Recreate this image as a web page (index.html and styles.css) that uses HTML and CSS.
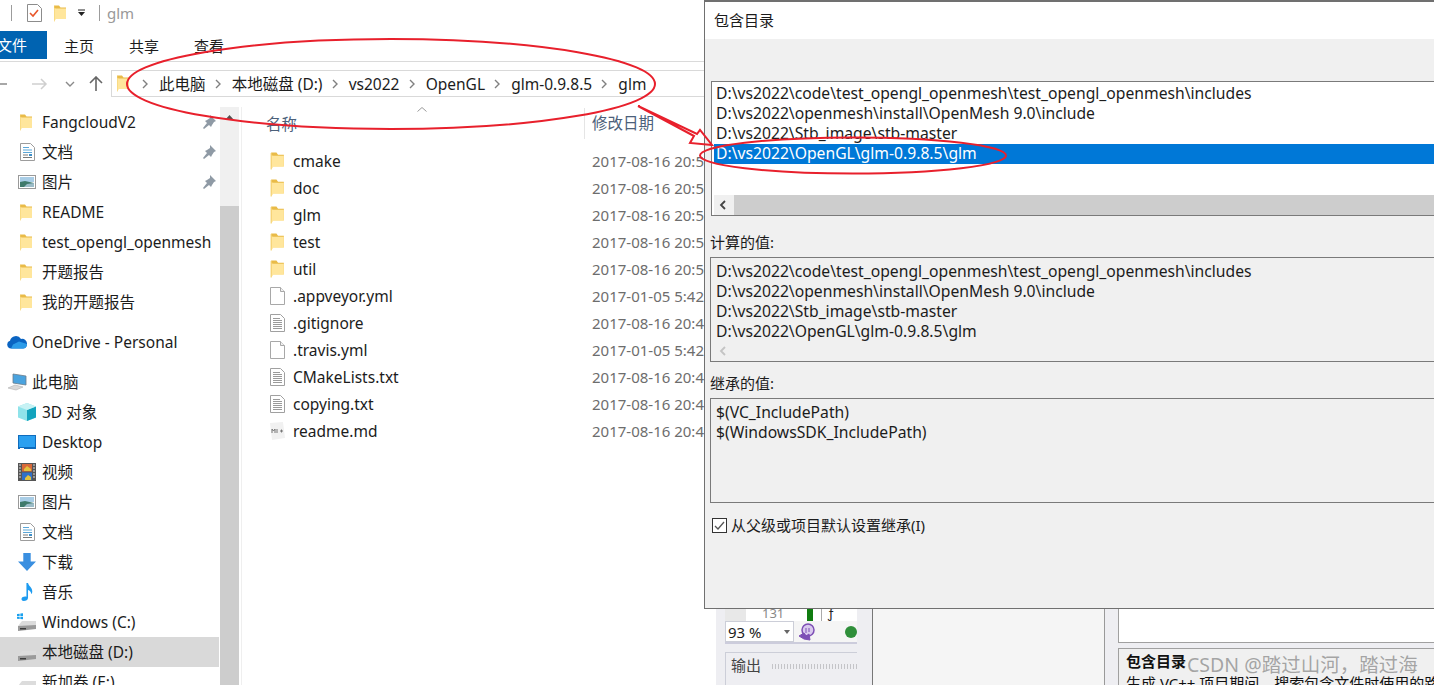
FILE: index.html
```html
<!DOCTYPE html>
<html lang="zh-CN">

<head>
    <meta charset="UTF-8">
    <title>glm</title>
    <link rel="stylesheet" href="styles.css">
</head>

<body>
    <svg class="defs" width="0" height="0">
        <symbol id="i-folder" viewBox="0 0 12 17">
            <path d="M0 .5h5l1.5 2H12v11H0z" fill="#e9bb48" />
            <path d="M2 3.5h10v10.5H2L0 16.5V3z" fill="#ffe69c" />
            <path d="M0 1v15.5" stroke="#f3cf6c" />
        </symbol>
        <symbol id="i-file" viewBox="0 0 15 18">
            <path d="M.5.5h10l4 4v13H.5z" fill="#fff" stroke="#a8a8a8" />
            <path d="M10.5.5v4h4" fill="#f0f0f0" stroke="#a8a8a8" />
        </symbol>
        <symbol id="i-text" viewBox="0 0 15 18">
            <path d="M.5.5h10l4 4v13H.5z" fill="#fff" stroke="#a0a0a0" />
            <path d="M3 4.5h7M3 6.5h9M3 8.5h9M3 10.5h9M3 12.5h9M3 14.5h9" stroke="#9a9a9a" />
        </symbol>
        <symbol id="i-md" viewBox="0 0 15 18">
            <path d="M0 1l13-1 2 16-13 2z" fill="#f1f1f1" />
            <path d="M2 11V7l1.500 2L5 7v4M7 11V7M10 9h3M11.500 7.500v3" fill="none" stroke="#777" />
        </symbol>
        <symbol id="i-pin" viewBox="0 0 14 14">
            <path d="M8 0l6 6-2 1-2 3-1 2-2-2-5 4-1-1 4-5-2-2 2-1 3-2z" fill="#8f9aa5" />
        </symbol>
        <symbol id="i-doc" viewBox="0 0 15 18">
            <path d="M.5.5h10l4 4v13H.5z" fill="#fff" stroke="#9c9c9c" />
            <path d="M3 4.500h6M3 7h9M3 9.500h9" stroke="#5ba7d8" />
            <path d="M3 12h5M3 14.500h9" stroke="#7a7a7a" />
            <path d="M9 11h3v2H9z" fill="#3d8fc9" />
        </symbol>
        <symbol id="i-pic" viewBox="0 0 18 14">
            <rect x=".5" y=".5" width="17" height="13" fill="#fff" stroke="#999" />
            <rect x="2" y="2" width="14" height="5" fill="#a9cde6" />
            <path d="M2 7l5-1 9 2v4H2z" fill="#3f7a6b" />
            <path d="M9 9l7-1v4H6z" fill="#9bbcc8" />
        </symbol>
        <symbol id="i-cloud" viewBox="0 0 20 13">
            <path d="M4 13a4 4 0 0 1-1-7.800A6 6 0 0 1 14 3.500a4.800 4.800 0 0 1 6 5c0 3-2 4.500-4 4.500z" fill="#0a64c2" />
            <path d="M4 13h12c2 0 4-1.500 4-4.500L12 6 6 9z" fill="#2b9be8" />
        </symbol>
        <symbol id="i-pc" viewBox="0 0 20 18">
            <path d="M6 1l13 2v9l-13-2z" fill="#4aa3df" stroke="#6b7c8a" stroke-width=".8" />
            <path d="M1 15l7-3 8 2-7 3z" fill="#d9d9d9" stroke="#b0b0b0" stroke-width=".6" />
        </symbol>
        <symbol id="i-cube" viewBox="0 0 18 18">
            <path d="M9 0l9 3.500v11L9 18l-9-3.500v-11z" fill="#8fe3ea" />
            <path d="M9 7l9-3.500v11L9 18z" fill="#13a3bd" />
            <path d="M9 0l9 3.500L9 7 0 3.500z" fill="#c7f2f4" />
        </symbol>
        <symbol id="i-desktop" viewBox="0 0 18 14">
            <rect width="18" height="14" fill="#0f6cbd" />
            <rect x="1" y="1" width="16" height="11" fill="#2ba0f0" />
            <path d="M2 13h4v1H2z" fill="#fff" />
        </symbol>
        <symbol id="i-video" viewBox="0 0 18 18">
            <rect width="18" height="18" fill="#555" />
            <rect x="4" y="1" width="10" height="7.500" fill="#d8693a" />
            <rect x="4" y="9.500" width="10" height="7.500" fill="#2f70c9" />
            <path d="M6 6l3-3 4 3v2H6zM7 15l3-3 3 2v3H7z" fill="#e2c23f" />
            <path d="M1 2h2M1 5h2M1 8h2M1 11h2M1 14h2M15 2h2M15 5h2M15 8h2M15 11h2M15 14h2" stroke="#ddd" />
        </symbol>
        <symbol id="i-down" viewBox="0 0 17 17">
            <path d="M5 0h7v8h5l-8.500 9L0 8h5z" fill="#3a8fe0" />
        </symbol>
        <symbol id="i-music" viewBox="0 0 12 17">
            <path d="M5 0h1.500c.5 3 4 4 4 8 0 1-.3 2-1 2.500.3-2-1.500-3.500-3-4V14c0 2-2 3-4 3s-2.500-1.500-2-2.500 2-2 4.500-1.500z" fill="#1d9bf0" />
        </symbol>
        <symbol id="i-drive" viewBox="0 0 18 10">
            <path d="M4 0h14v5L0 10V5z" fill="#dcdcdc" />
            <path d="M0 5l18-1v4L0 10z" fill="#9a9a9a" />
            <path d="M2 7h6v1.500H2z" fill="#3c3c3c" />
        </symbol>
        <symbol id="i-win" viewBox="0 0 18 14">
            <path d="M0 1l4-.5V4H0zM5 .4L9 0v4H5zM0 5h4v3.500L0 8zM5 5h4v4l-4-.5z" fill="#19a0ee" />
        </symbol>
    </svg>

    <div class="desktop">
        <div class="explorer">
            <div class="titlebar">
                <i class="sep"></i>
                <svg class="t-check" viewBox="0 0 15 18">
                    <path d="M.5.5h10l4 4v13H.5z" fill="#fff" stroke="#8c8c8c" />
                    <path d="M3 9l3 3 5-6" fill="none" stroke="#e8562a" stroke-width="1.600" />
                </svg>
                <svg class="t-folder"><use href="#i-folder" /></svg>
                <svg class="t-drop" viewBox="0 0 9 8">
                    <path d="M1 1h7" stroke="#222" />
                    <path d="M1 3h7L4.500 7z" fill="#222" />
                </svg>
                <i class="sep"></i>
                <span class="t-name">glm</span>
            </div>
            <div class="ribbon">
                <span class="tab-file">文件</span>
                <span class="tab tab-home">主页</span>
                <span class="tab">共享</span>
                <span class="tab">查看</span>
            </div>
            <div class="navbar">
                <div class="nav-buttons">
                    <svg class="nav-back" viewBox="0 0 16 12"><path d="M0 6h15" stroke="#8a8a8a" stroke-width="1.500" /></svg>
                    <svg class="nav-fwd" viewBox="0 0 16 12"><path d="M0 6h14M9 1l5 5-5 5" fill="none" stroke="#cfcfcf" stroke-width="1.500" /></svg>
                    <svg class="nav-more" viewBox="0 0 10 6"><path d="M1 1l4 4 4-4" fill="none" stroke="#8a8a8a" stroke-width="1.400" /></svg>
                    <svg class="nav-up" viewBox="0 0 14 15"><path d="M7 15V1M1 7l6-6 6 6" fill="none" stroke="#666" stroke-width="1.600" /></svg>
                </div>
                <div class="address">
                    <svg class="a-folder"><use href="#i-folder" /></svg>
                    <div class="crumb"><svg viewBox="0 0 6 10"><path d="M1 1l4 4-4 4" /></svg><span>此电脑</span></div>
                    <div class="crumb"><svg viewBox="0 0 6 10"><path d="M1 1l4 4-4 4" /></svg><span>本地磁盘 (D:)</span></div>
                    <div class="crumb"><svg viewBox="0 0 6 10"><path d="M1 1l4 4-4 4" /></svg><span>vs2022</span></div>
                    <div class="crumb"><svg viewBox="0 0 6 10"><path d="M1 1l4 4-4 4" /></svg><span>OpenGL</span></div>
                    <div class="crumb"><svg viewBox="0 0 6 10"><path d="M1 1l4 4-4 4" /></svg><span>glm-0.9.8.5</span></div>
                    <div class="crumb"><svg viewBox="0 0 6 10"><path d="M1 1l4 4-4 4" /></svg><span>glm</span></div>
                </div>
            </div>
            <div class="main">
                <div class="sidebar">
                    <div class="nav-row"><svg class="ic-folder"><use href="#i-folder" /></svg><span>FangcloudV2</span><svg class="pin"><use href="#i-pin" /></svg></div>
                    <div class="nav-row"><svg class="ic-doc"><use href="#i-doc" /></svg><span>文档</span><svg class="pin"><use href="#i-pin" /></svg></div>
                    <div class="nav-row"><svg class="ic-pic"><use href="#i-pic" /></svg><span>图片</span><svg class="pin"><use href="#i-pin" /></svg></div>
                    <div class="nav-row"><svg class="ic-folder"><use href="#i-folder" /></svg><span>README</span></div>
                    <div class="nav-row"><svg class="ic-folder"><use href="#i-folder" /></svg><span>test_opengl_openmesh</span></div>
                    <div class="nav-row"><svg class="ic-folder"><use href="#i-folder" /></svg><span>开题报告</span></div>
                    <div class="nav-row"><svg class="ic-folder"><use href="#i-folder" /></svg><span>我的开题报告</span></div>
                    <div class="nav-row nav-root"><svg class="ic-root"><use href="#i-cloud" /></svg><span>OneDrive - Personal</span></div>
                    <div class="nav-row nav-root"><svg class="ic-root"><use href="#i-pc" /></svg><span>此电脑</span></div>
                    <div class="nav-row"><svg class="ic-pic"><use href="#i-cube" /></svg><span>3D 对象</span></div>
                    <div class="nav-row"><svg class="ic-pic"><use href="#i-desktop" /></svg><span>Desktop</span></div>
                    <div class="nav-row"><svg class="ic-pic"><use href="#i-video" /></svg><span>视频</span></div>
                    <div class="nav-row"><svg class="ic-pic"><use href="#i-pic" /></svg><span>图片</span></div>
                    <div class="nav-row"><svg class="ic-doc"><use href="#i-doc" /></svg><span>文档</span></div>
                    <div class="nav-row"><svg class="ic-pic"><use href="#i-down" /></svg><span>下载</span></div>
                    <div class="nav-row"><svg class="ic-doc"><use href="#i-music" /></svg><span>音乐</span></div>
                    <div class="nav-row"><div class="ic-stack"><svg class="ic-drive"><use href="#i-drive" /></svg><svg class="ic-win"><use href="#i-win" /></svg></div><span>Windows (C:)</span></div>
                    <div class="nav-row selected"><div class="ic-stack"><svg class="ic-drive"><use href="#i-drive" /></svg></div><span>本地磁盘 (D:)</span></div>
                    <div class="nav-row"><div class="ic-stack"><svg class="ic-drive"><use href="#i-drive" /></svg></div><span>新加卷 (E:)</span></div>
                </div>
                <div class="scrollbar">
                    <svg class="sb-up" viewBox="0 0 9 5"><path d="M0 5l4.500-5L9 5z" fill="#505050" /></svg>
                    <div class="sb-thumb"></div>
                </div>
                <div class="files">
                    <div class="file-head">
                        <span class="col-name">名称</span>
                        <svg class="sort" viewBox="0 0 10 5"><path d="M.5 4.500L5 .5l4.500 4" fill="none" stroke="#9a9a9a" /></svg>
                        <span class="col-date">修改日期</span>
                    </div>
                    <div class="file-row"><svg class="ic-file"><use href="#i-folder" /></svg><span class="f-name">cmake</span><span class="f-date">2017-08-16 20:56</span></div>
                    <div class="file-row"><svg class="ic-file"><use href="#i-folder" /></svg><span class="f-name">doc</span><span class="f-date">2017-08-16 20:56</span></div>
                    <div class="file-row"><svg class="ic-file"><use href="#i-folder" /></svg><span class="f-name">glm</span><span class="f-date">2017-08-16 20:56</span></div>
                    <div class="file-row"><svg class="ic-file"><use href="#i-folder" /></svg><span class="f-name">test</span><span class="f-date">2017-08-16 20:56</span></div>
                    <div class="file-row"><svg class="ic-file"><use href="#i-folder" /></svg><span class="f-name">util</span><span class="f-date">2017-08-16 20:56</span></div>
                    <div class="file-row"><svg class="ic-file"><use href="#i-file" /></svg><span class="f-name">.appveyor.yml</span><span class="f-date">2017-01-05 5:42</span></div>
                    <div class="file-row"><svg class="ic-file"><use href="#i-text" /></svg><span class="f-name">.gitignore</span><span class="f-date">2017-08-16 20:46</span></div>
                    <div class="file-row"><svg class="ic-file"><use href="#i-file" /></svg><span class="f-name">.travis.yml</span><span class="f-date">2017-01-05 5:42</span></div>
                    <div class="file-row"><svg class="ic-file"><use href="#i-text" /></svg><span class="f-name">CMakeLists.txt</span><span class="f-date">2017-08-16 20:46</span></div>
                    <div class="file-row"><svg class="ic-file"><use href="#i-text" /></svg><span class="f-name">copying.txt</span><span class="f-date">2017-08-16 20:46</span></div>
                    <div class="file-row"><svg class="ic-file"><use href="#i-md" /></svg><span class="f-name">readme.md</span><span class="f-date">2017-08-16 20:46</span></div>
                </div>
            </div>
        </div>

        <div class="vs-window">
            <div class="vs-left">
                <div class="vs-tool">
                    <div class="vs-lines"><i class="gutter"></i><span class="line-no">131</span><i class="green-bar"></i><span class="code-box">ƒ</span></div>
                    <div class="vs-zoom">
                        <div class="zoom-box"><span>93 %</span><i class="caret"></i></div>
                        <svg class="copilot" viewBox="0 0 16 18">
                            <circle cx="9" cy="7" r="6" fill="#d9c9ee" stroke="#7d4fb5" stroke-width="1.500" />
                            <path d="M7 5v5M10 5v4M0 13l5-3 2 3 3-2 1 6-6-1z" fill="#7d4fb5" stroke="#7d4fb5" />
                        </svg>
                        <i class="green-dot"></i>
                    </div>
                </div>
                <div class="vs-output">
                    <span>输出</span>
                    <i class="gripper"></i>
                </div>
            </div>
            <div class="vs-middle"></div>
            <div class="vs-right">
                <div class="vs-value"></div>
                <div class="vs-help">
                    <b>包含目录</b>
                    <span class="help-text">生成 VC++ 项目期间，搜索包含文件时使用的路径</span>
                </div>
            </div>
        </div>

        <div class="dialog">
            <div class="dlg-title">包含目录</div>
            <div class="dlg-body">
                <div class="editor">
                    <div class="ed-line">D:\vs2022\code\test_opengl_openmesh\test_opengl_openmesh\includes</div>
                    <div class="ed-line">D:\vs2022\openmesh\install\OpenMesh 9.0\include</div>
                    <div class="ed-line">D:\vs2022\Stb_image\stb-master</div>
                    <div class="ed-line active">D:\vs2022\OpenGL\glm-0.9.8.5\glm</div>
                    <div class="hscroll">
                        <div class="hs-btn"><svg viewBox="0 0 7 10"><path d="M6 1L2 5l4 4" fill="none" stroke="#444" stroke-width="1.800" /></svg></div>
                        <div class="hs-track"></div>
                    </div>
                </div>
                <div class="dlg-label">计算的值:</div>
                <div class="value-box computed">
                    <div class="clip-lines">
                        <div class="ed-line">D:\vs2022\code\test_opengl_openmesh\test_opengl_openmesh\includes</div>
                        <div class="ed-line">D:\vs2022\openmesh\install\OpenMesh 9.0\include</div>
                        <div class="ed-line">D:\vs2022\Stb_image\stb-master</div>
                        <div class="ed-line">D:\vs2022\OpenGL\glm-0.9.8.5\glm</div>
                    </div>
                    <div class="hscroll off">
                        <div class="hs-btn"><svg viewBox="0 0 7 10"><path d="M6 1L2 5l4 4" fill="none" stroke="#c4c4c4" stroke-width="1.800" /></svg></div>
                    </div>
                </div>
                <div class="dlg-label label-next">继承的值:</div>
                <div class="value-box">
                    <div class="ed-line">$(VC_IncludePath)</div>
                    <div class="ed-line">$(WindowsSDK_IncludePath)</div>
                </div>
                <label class="inherit">
                    <span class="check"><svg viewBox="0 0 13 13"><path d="M2 7l3 3 6-7" fill="none" stroke="#555" stroke-width="1.300" /></svg></span>
                    <span class="inherit-text">从父级或项目默认设置继承(I)</span>
                </label>
            </div>
        </div>

        <svg class="marks" viewBox="0 0 1434 685">
            <ellipse cx="391" cy="84" rx="264" ry="45" />
            <ellipse cx="853" cy="155.500" rx="153" ry="18" />
            <path d="M638 106L694 136 690 143 712 145 700 130 697 134z" />
        </svg>

        <div class="watermark">CSDN @踏过山河，踏过海</div>
    </div>
</body>

</html>
```
FILE: styles.css
```css
* {
    box-sizing: border-box;
}

body {
    margin: 0;
    overflow: hidden;
    background: #fff;
    font-family: "Noto Sans", "Noto Sans CJK SC", sans-serif;
    font-size: 15.5px;
    color: #1c1c1c;
}

.defs {
    position: absolute;
}

svg {
    display: block;
    flex: none;
}

.desktop {
    position: relative;
    width: 1434px;
    height: 685px;
    overflow: hidden;
}

/* explorer window */
.explorer {
    position: absolute;
    left: 0;
    top: 0;
    width: 716px;
    height: 685px;
    display: flex;
    flex-direction: column;
    background: #fff;
}

.titlebar {
    height: 31px;
    display: flex;
    align-items: center;
    padding-left: 11px;
    padding-bottom: 5px;
}

.sep {
    width: 1px;
    height: 16px;
    background: #9c9c9c;
}

.t-check {
    width: 15px;
    height: 18px;
    margin-left: 15px;
}

.t-folder {
    width: 12px;
    height: 17px;
    margin-left: 12px;
}

.t-drop {
    width: 9px;
    height: 8px;
    margin-left: 11px;
    margin-right: 13px;
}

.t-name {
    margin-left: 7px;
    color: #999;
    font-size: 15px;
}

.ribbon {
    height: 31px;
    display: flex;
    align-items: flex-start;
    border-bottom: 1px solid #dadada;
    font-size: 15px;
}

.tab-file {
    width: 47px;
    height: 28px;
    background: #0063b1;
    color: #fff;
    line-height: 28px;
    text-indent: -3px;
}

.tab {
    line-height: 30px;
    width: 30px;
    margin-left: 35px;
    white-space: nowrap;
}

.tab-home {
    margin-left: 17px;
}

.navbar {
    height: 45px;
    display: flex;
    align-items: center;
    flex: none;
    padding-bottom: 2px;
}

.nav-buttons {
    width: 111px;
    height: 27px;
    display: flex;
    align-items: center;
}

.nav-back {
    width: 16px;
    height: 12px;
    margin-left: -8px;
}

.nav-fwd {
    width: 16px;
    height: 12px;
    margin-left: 24px;
}

.nav-more {
    width: 10px;
    height: 6px;
    margin-left: 17px;
}

.nav-up {
    width: 14px;
    height: 15px;
    margin-left: 14px;
}

.address {
    width: 605px;
    height: 27px;
    border: 1px solid #d9d9d9;
    display: flex;
    align-items: center;
    padding-left: 5px;
    white-space: nowrap;
}

.a-folder {
    width: 12px;
    height: 17px;
    margin-right: 13px;
}

.crumb {
    display: flex;
    align-items: center;
    gap: 11px;
    margin-right: 9.2px;
}

.crumb svg {
    width: 6px;
    height: 10px;
}

.crumb path {
    fill: none;
    stroke: #808080;
    stroke-width: 1.400;
}

.main {
    flex: 1;
    min-height: 0;
    display: flex;
}

/* nav pane */
.sidebar {
    width: 220px;
    flex: none;
    overflow: hidden;
    padding-right: 1px;
}

.nav-row {
    height: 30px;
    display: flex;
    align-items: center;
    padding-left: 18px;
    white-space: nowrap;
}

.nav-row span {
    margin-left: 6px;
    line-height: 20px;
    margin-bottom: 1px;
}

.nav-root {
    padding-left: 7px;
    margin-top: 10px;
}

.nav-root span {
    margin-left: 5px;
}

.selected {
    background: #d9d9d9;
}

.ic-folder {
    width: 12px;
    height: 17px;
    margin-left: 2px;
    margin-right: 4px;
}

.ic-doc {
    width: 15px;
    height: 18px;
    margin-left: 2px;
    margin-right: 1px;
}

.ic-pic {
    width: 18px;
    height: 18px;
}

.ic-root {
    width: 20px;
    height: 18px;
}

.ic-stack {
    position: relative;
    width: 18px;
    height: 18px;
}

.ic-drive {
    position: absolute;
    left: 0;
    bottom: 0;
    width: 18px;
    height: 10px;
}

.ic-win {
    position: absolute;
    left: -1px;
    top: 0;
    width: 12px;
    height: 10px;
}

.pin {
    width: 14px;
    height: 14px;
    margin-left: auto;
    margin-right: 3px;
}

.scrollbar {
    width: 19px;
    flex: none;
    background: #f0f0f0;
    display: flex;
    flex-direction: column;
    align-items: center;
    padding-top: 8px;
}

.sb-up {
    width: 9px;
    height: 5px;
}

.sb-thumb {
    width: 100%;
    margin-top: 86px;
    flex: 1;
    background: #cdcdcd;
}

.files {
    flex: 1;
    min-width: 0;
    margin-left: 2px;
    border-left: 1px solid #efefef;
    overflow: hidden;
}

.file-head {
    position: relative;
    height: 40px;
    display: flex;
    padding-left: 24px;
    padding-top: 5px;
    color: #4c607a;
}

.col-name {
    width: 318px;
    line-height: 24px;
}

.col-date {
    height: 31px;
    line-height: 22px;
    padding-left: 7px;
    border-left: 1px solid #e5e5e5;
    margin-top: -4px;
    padding-top: 4px;
}

.sort {
    position: absolute;
    left: 175px;
    top: 0;
    width: 10px;
    height: 5px;
}

.file-row {
    height: 27px;
    display: flex;
    align-items: center;
    padding-left: 28px;
    white-space: nowrap;
}

.ic-file {
    width: 15px;
    height: 18px;
}

.f-name {
    width: 299px;
    margin-left: 8px;
}

.f-date {
    color: #6d6d6d;
    font-size: 15px;
}

/* visual studio window behind the dialog */
.vs-window {
    position: absolute;
    left: 716px;
    top: 600px;
    width: 718px;
    height: 85px;
    display: flex;
    background: #eeeef2;
}

.vs-left {
    width: 141px;
    flex: none;
    padding: 9px 0 0 9px;
    overflow: hidden;
}

.vs-lines {
    height: 12px;
    display: flex;
    background: #fff;
    color: #888;
    font-size: 13px;
    line-height: 8px;
}

.gutter {
    width: 21px;
    background: #e8e8e8;
}

.line-no {
    width: 61px;
    padding-left: 16px;
}

.green-bar {
    width: 6px;
    background: #107c10;
}

.code-box {
    flex: 1;
    margin-left: 8px;
    padding-left: 6px;
    border-left: 1px solid #aaa;
    color: #222;
}

.vs-zoom {
    height: 23px;
    display: flex;
    align-items: center;
    background: #f5f5f5;
    border-bottom: 2px solid #ccccdc;
    overflow: hidden;
}

.zoom-box {
    width: 75px;
    height: 21px;
    background: #fff;
    border: 1px solid #ccced8;
    display: flex;
    align-items: center;
    justify-content: space-between;
    padding: 0 3px 0 2px;
    font-size: 15px;
}

.caret {
    width: 0;
    height: 0;
    border: 3px solid transparent;
    border-top: 4px solid #666;
    border-bottom: 0;
}

.copilot {
    width: 16px;
    height: 18px;
    margin-left: 5px;
}

.green-dot {
    flex: none;
    width: 12px;
    height: 12px;
    margin-left: 30px;
    border-radius: 50%;
    background: #2f8f3a;
}

.vs-output {
    height: 40px;
    margin-top: 8px;
    padding: 1px 0 0 5px;
    display: flex;
    align-items: flex-start;
    gap: 11px;
    border: 1px solid #ccced8;
    border-right: 0;
    font-size: 15px;
    color: #444;
}

.gripper {
    flex: 1;
    height: 5px;
    margin-top: 10px;
    background: repeating-linear-gradient(90deg, #c4c4c8 0 1px, transparent 1px 3px);
}

.vs-middle {
    width: 233px;
    flex: none;
    margin-left: 15px;
    background: #f5f5f5;
    border-left: 1px solid #777;
    border-right: 1px solid #999;
}

.vs-right {
    flex: 1;
    min-width: 0;
    padding-left: 13px;
}

.vs-value {
    height: 43px;
    background: #fff;
    border: 1px solid #a0a0a0;
    border-right: 0;
}

.vs-help {
    height: 60px;
    margin-top: 5px;
    padding: 2px 0 0 7px;
    background: #f0f0f0;
    border: 1px solid #a0a0a0;
    border-right: 0;
    display: flex;
    flex-direction: column;
    font-size: 15px;
    line-height: 20px;
    color: #111;
    white-space: nowrap;
}

.help-text {
    margin-top: 2px;
}

/* include directories dialog */
.dialog {
    position: absolute;
    left: 704px;
    top: 0;
    width: 730px;
    height: 609px;
    display: flex;
    flex-direction: column;
    background: #f0f0f0;
    border: 1px solid #707070;
    border-top-width: 2px;
    border-right: 0;
}

.dlg-title {
    height: 37px;
    background: #fff;
    line-height: 36px;
    padding-left: 9px;
    font-size: 15px;
}

.dlg-body {
    flex: 1;
    padding: 42px 0 0 5px;
    display: flex;
    flex-direction: column;
}

.editor {
    margin-left: 1px;
    height: 135px;
    background: #fff;
    border: 1px solid #7a7a7a;
    border-right: 0;
    padding: 2px 0 0 2px;
    display: flex;
    flex-direction: column;
}

.ed-line {
    height: 20px;
    line-height: 18px;
    padding-left: 2px;
    white-space: nowrap;
    font-size: 15.7px;
}

.ed-line.active {
    background: #0078d7;
    color: #fff;
}

.hscroll {
    margin-top: auto;
    height: 20px;
    display: flex;
    background: #f0f0f0;
}

.hs-btn {
    width: 20px;
    padding-right: 4px;
    display: flex;
    align-items: center;
    justify-content: center;
}

.hs-btn svg {
    width: 7px;
    height: 10px;
}

.hs-track {
    flex: 1;
    background: #cdcdcd;
}

.dlg-label {
    height: 20px;
    margin-top: 17px;
    line-height: 18px;
    font-size: 15px;
}

.label-next {
    margin-top: 12px;
}

.value-box {
    height: 105px;
    margin-top: 4px;
    border: 1px solid #7a7a7a;
    border-right: 0;
    padding: 4px 0 0 3px;
    display: flex;
    flex-direction: column;
}

.clip-lines {
    height: 79px;
    overflow: hidden;
}

.hscroll.off {
    margin-top: 0;
}

.inherit {
    display: flex;
    align-items: center;
    gap: 4px;
    height: 16px;
    margin: 14px 0 0 2px;
    font-size: 15px;
}

.inherit-text {
    line-height: 16px;
}

.check {
    width: 15px;
    height: 15px;
    background: #fff;
    border: 1px solid #333;
}

.check svg {
    width: 13px;
    height: 13px;
}

/* red hand drawn marks on top of the screenshot */
.marks {
    position: absolute;
    left: 0;
    top: 0;
    width: 1434px;
    height: 685px;
    pointer-events: none;
}

.marks ellipse,
.marks path {
    fill: none;
    stroke: #e8202c;
    stroke-width: 2;
}

.watermark {
    position: absolute;
    left: 1187px;
    top: 653px;
    font-size: 19.5px;
    line-height: 24px;
    color: rgba(130, 130, 130, 0.7);
    white-space: nowrap;
}
```
